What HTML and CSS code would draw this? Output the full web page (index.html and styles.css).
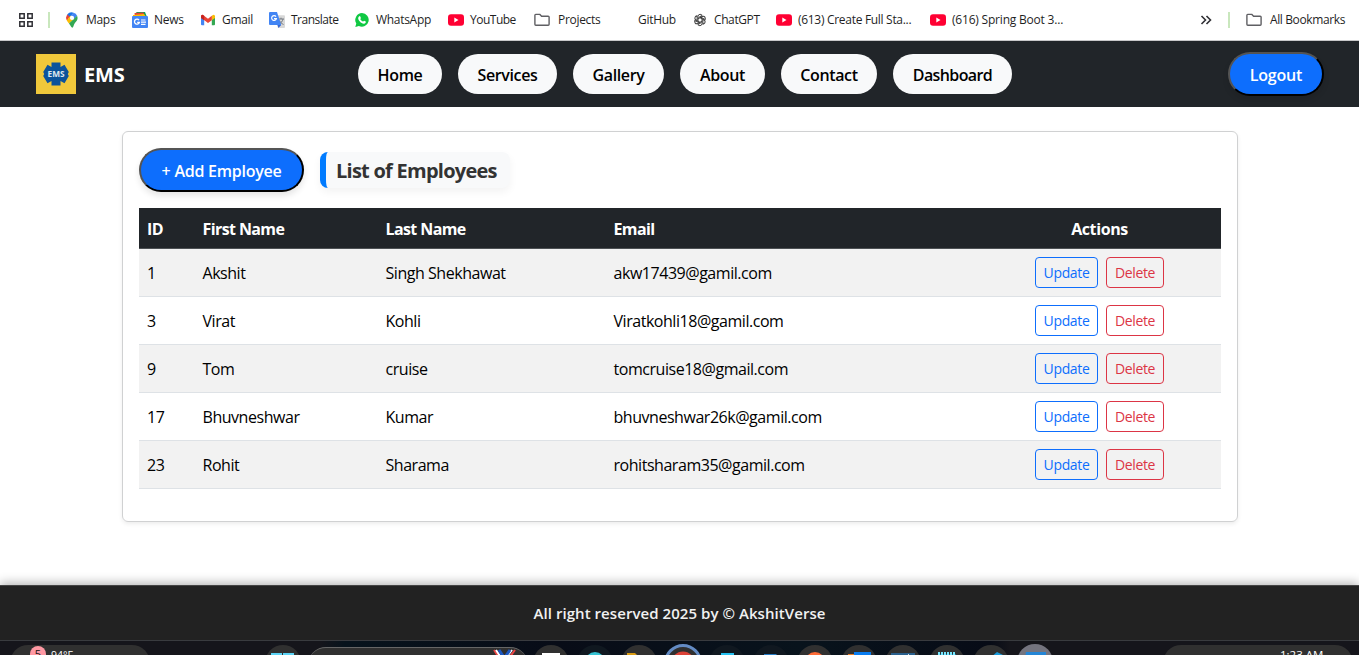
FILE: index.html
```html
<!DOCTYPE html>
<html lang="en">
<head>
<meta charset="utf-8">
<title>EMS</title>
<link rel="stylesheet" href="styles.css">
</head>
<body>
<svg class="defs" width="0" height="0">
  <symbol id="yt" viewBox="0 0 16 16"><rect y="2.3" width="16" height="11.4" rx="3" fill="#ff0033"/><path d="M6.3 5.6v4.8L10.5 8z" fill="#fff"/></symbol>
  <symbol id="folder" viewBox="0 0 16 16"><path d="M.9 12.2V3.2q0-.8.8-.8h4.2l1.7 1.8h6.6q.9 0 .9.9v7.2q0 .9-.9.9H1.8q-.9 0-.9-1z" fill="none" stroke="#5f5f63" stroke-width="1.4"/></symbol>
</svg>
<div class="bookmarks">
  <svg class="apps" width="14" height="14" viewBox="0 0 14 14" fill="none" stroke="#303035" stroke-width="1.5"><path d="M.8.8h4.4v4.4H.8zM8.8.8h4.4v4.4H8.8zM.8 8.8h4.4v4.4H.8zM8.8 8.8h4.4v4.4H8.8z"/></svg>
  <i class="sep"></i>
  <div class="bm maps"><svg viewBox="0 0 16 16"><path d="M3.4 8.7C2.4 7 2 6 2.2 4.7L6 8z" fill="#ea4335"/><path d="M3.2 2.5A5.8 5.8 0 0 1 9.6.7L5.2 5.9z" fill="#1a73e8"/><path d="M3.2 2.5l2.7 2.3-3.2 3.4A5.7 5.7 0 0 1 3.2 2.5z" fill="#ea4335"/><path d="M9.6.7a5.6 5.6 0 0 1 3.5 3L9.9 7.4 6.3 4.5z" fill="#4285f4"/><path d="M2.7 8.2l4-4.7L10 7.1l-5 4.5C4.2 10.4 3.300 9.500 2.700 8.200z" fill="#fbbc04"/><path d="M13.100 3.700c1.600 4-1.200 5.800-2.500 7.900-1 1.600-1.200 4.200-2.300 4.200S7 13.900 5 11.600z" fill="#34a853"/><circle cx="8" cy="5.900" r="2.100" fill="#fff"/></svg><span>Maps</span></div>
  <div class="bm news"><svg viewBox="0 0 16 16"><path d="M4.500 0H13l2 5H3z" fill="#0f9d58"/><path d="M2.500 1l9-.5L13 6H3z" fill="#ea4335"/><path d="M1 3l11-1 3 4H1z" fill="#fbbc04"/><rect y="4" width="16" height="12" rx="1" fill="#4285f4"/><path d="M7 8.200A2.500 2.500 0 1 0 7.400 10.300H5.200" fill="none" stroke="#fff" stroke-width="1.300"/><path d="M9 8h4.500M9 10.200h5M9 12.400h4.500" stroke="#fff" stroke-width="1.200"/></svg><span>News</span></div>
  <div class="bm gmail"><svg viewBox="0 0 16 16"><path d="M1 4h3.200v9.200H2q-1 0-1-1z" fill="#4285f4"/><path d="M11.800 4H15v8.200q0 1-1 1h-2.200z" fill="#34a853"/><path d="M11.800 3.700l1.200-.8q2-.6 2 1.500v1.500l-3.200 2.300z" fill="#fbbc04"/><path d="M1 4.400q0-2.100 2-1.500l5 3.800 3.800-3v4.500L8 11 1 5.800z" fill="#ea4335"/><path d="M1 4.400q0-1.700 1.500-1.600l1.700 1v4.400L1 5.900z" fill="#c5221f"/></svg><span>Gmail</span></div>
  <div class="bm translate"><svg viewBox="0 0 16 16"><path d="M5 3.300h10q1 0 1 1V15q0 1-1 1H9z" fill="#d8d8d8"/><path d="M9 7h6M12 5.700V7m2 0c-.5 2.500-2 4-4 5m.5-3.500c.8 1.800 2 3 4 4" stroke="#747b83" fill="none"/><path d="M1 0h7l4.200 12.900H1q-1 0-1-1V1q0-1 1-1z" fill="#4285f4"/><path d="M8.500 12.900h3.700L9.500 16z" fill="#3367d6"/><path d="M7 4.600A2.400 2.400 0 1 0 7.400 6.600H5" fill="none" stroke="#fff" stroke-width="1.200"/></svg><span>Translate</span></div>
  <div class="bm whatsapp"><svg viewBox="0 0 16 16"><path d="M8 1.100A6.800 6.800 0 1 1 4.900 14L1.300 15l1-3.500A6.800 6.800 0 0 1 8 1.100z" fill="#10c843"/><path d="M5 4.600c.6-.7 1-.7 1.300 0l.6 1.300c.1.500-.7.900-.7 1.200.6 1.300 1.500 2 2.700 2.500.4 0 .8-1 1.200-.9l1.600.8c.6.400-.3 2.200-1.900 2.200C7 11.500 4 8 4.200 6.200c0-.6.300-1.200.8-1.600z" fill="#fff"/></svg><span>WhatsApp</span></div>
  <div class="bm youtube"><svg><use href="#yt"/></svg><span>YouTube</span></div>
  <div class="bm projects"><svg><use href="#folder"/></svg><span>Projects</span></div>
  <div class="bm github"><span>GitHub</span></div>
  <div class="bm chatgpt"><svg viewBox="0 0 16 16" fill="none" stroke="#3d3d3d" stroke-width=".95"><g id="petal"><path d="M6 9.200V4.500q0-2 2-2.200 1.300 0 2.200 1L6.500 5.600"/></g><use href="#petal" transform="rotate(60 8 8)"/><use href="#petal" transform="rotate(120 8 8)"/><use href="#petal" transform="rotate(180 8 8)"/><use href="#petal" transform="rotate(240 8 8)"/><use href="#petal" transform="rotate(300 8 8)"/></svg><span>ChatGPT</span></div>
  <div class="bm full"><svg><use href="#yt"/></svg><span>(613) Create Full Sta...</span></div>
  <div class="bm spring"><svg><use href="#yt"/></svg><span>(616) Spring Boot 3...</span></div>
  <svg class="more" width="12" height="10" viewBox="0 0 12 10" fill="none" stroke="#303035" stroke-width="1.600"><path d="M1.500 1l4 4-4 4M6.500 1l4 4-4 4"/></svg>
  <i class="sep"></i>
  <div class="bm all"><svg><use href="#folder"/></svg><span>All Bookmarks</span></div>
</div>

<header class="navbar">
  <div class="brand">
    <svg width="40" height="40" viewBox="0 0 40 40"><path d="M0 0h40v40H0z" fill="#f0c83b"/><path d="M15.500 8.500h9v4.500l4-2.300 4.300 7.200-1 2.100 1 2.100-4.300 7.200-4-2.300v4.500h-9V27l-4 2.300-4.300-7.200 1-2.100-1-2.100 4.300-7.200 4 2.300z" fill="#0c539b"/><text x="20" y="23.200" text-anchor="middle" textLength="17" lengthAdjust="spacingAndGlyphs" class="logo-text">EMS</text></svg>
    <span>EMS</span>
  </div>
  <nav class="links">
    <a class="home">Home</a><a class="services">Services</a><a class="gallery">Gallery</a><a class="about">About</a><a class="contact">Contact</a><a class="dashboard">Dashboard</a>
  </nav>
  <button class="btn-main logout">Logout</button>
</header>

<main class="content">
  <section class="card">
    <div class="card-head">
      <button class="btn-main add">+ Add Employee</button>
      <h2>List of Employees</h2>
    </div>
    <table>
      <colgroup><col class="c-id"><col class="c-first"><col class="c-last"><col class="c-email"><col class="c-act"></colgroup>
      <thead><tr><th>ID</th><th>First Name</th><th>Last Name</th><th>Email</th><th class="act">Actions</th></tr></thead>
      <tbody>
        <tr><td>1</td><td>Akshit</td><td>Singh Shekhawat</td><td>akw17439@gamil.com</td><td><div class="actions"><button class="upd">Update</button><button class="del">Delete</button></div></td></tr>
        <tr><td>3</td><td>Virat</td><td>Kohli</td><td>Viratkohli18@gamil.com</td><td><div class="actions"><button class="upd">Update</button><button class="del">Delete</button></div></td></tr>
        <tr><td>9</td><td>Tom</td><td>cruise</td><td>tomcruise18@gmail.com</td><td><div class="actions"><button class="upd">Update</button><button class="del">Delete</button></div></td></tr>
        <tr><td>17</td><td>Bhuvneshwar</td><td>Kumar</td><td>bhuvneshwar26k@gamil.com</td><td><div class="actions"><button class="upd">Update</button><button class="del">Delete</button></div></td></tr>
        <tr><td>23</td><td>Rohit</td><td>Sharama</td><td>rohitsharam35@gamil.com</td><td><div class="actions"><button class="upd">Update</button><button class="del">Delete</button></div></td></tr>
      </tbody>
    </table>
  </section>
</main>

<footer class="footer">All right reserved 2025 by © AkshitVerse</footer>

<div class="taskbar">
  <div class="pill weather"><b>5</b><span>94°F</span></div>
  <div class="disc start"><svg viewBox="0 0 36 36"><path d="M6 8h11v11H6zM18 8h11v11H18z" fill="#5bd3f5"/></svg></div>
  <div class="pill search"><svg viewBox="0 0 50 12"><ellipse cx="9" cy="11" rx="5" ry="4" fill="#777"/><path d="M21 2l8 12" stroke="#e44" stroke-width="2"/><path d="M23 2l8 12M39 2l-8 10" stroke="#fff" stroke-width="2"/><path d="M26 2l6 9M37 2l-7 10" stroke="#1c58c4" stroke-width="3"/><path d="M42 2l-9 12" stroke="#e44" stroke-width="2"/></svg></div>
  <div class="disc view"><svg viewBox="0 0 36 36"><path d="M9 8h18v12H9z" fill="#fff"/></svg></div>
  <div class="disc dark edge"><svg viewBox="0 0 36 36"><circle cx="18" cy="17" r="10" fill="#36c3d3"/></svg></div>
  <div class="disc files"><svg viewBox="0 0 36 36"><path d="M6 8h8l3 3v8H6z" fill="#d99b13"/></svg></div>
  <div class="disc ring"><svg viewBox="0 0 36 36"><circle cx="18" cy="18" r="13" fill="#dc4237"/></svg></div>
  <div class="disc dark phone"><svg viewBox="0 0 36 36"><path d="M12 8h13v3H12z" fill="#25c1f1"/><path d="M13 11h11v9H13z" fill="#1572b5"/></svg></div>
  <div class="disc dark mail"><svg viewBox="0 0 36 36"><path d="M11 9h12l3 3v8H11z" fill="#247bc5"/></svg></div>
  <div class="disc postman"><svg viewBox="0 0 36 36"><circle cx="18" cy="17" r="10" fill="#ff6c37"/></svg></div>
  <div class="disc outlook"><svg viewBox="0 0 36 36"><path d="M7 9h6v10H7z" fill="#e87b25"/><path d="M13 7h17v13H13z" fill="#087cf0"/></svg></div>
  <div class="disc sql"><svg viewBox="0 0 36 36"><path d="M6 8h24v12H6z" fill="#2a608d"/><path d="M23 9l3 3" stroke="#ddd"/></svg></div>
  <div class="disc notepad"><svg viewBox="0 0 36 36"><path d="M9 9h18v11H9z" fill="#176b88"/><path d="M9 9h18" stroke="#77e7ff" stroke-width="4" stroke-dasharray="2 1"/></svg></div>
  <div class="disc code"><svg viewBox="0 0 36 36"><path d="M17 13l7-6 6 3v10H17z" fill="#189bdc"/></svg></div>
  <div class="disc active"><svg viewBox="0 0 36 36"><path d="M9 8h20v12H7z" fill="#2485d5"/></svg></div>
  <div class="pill clock"><span>1:23 AM</span></div>
</div>
</body>
</html>
```

FILE: styles.css
```css
* { box-sizing: border-box; }
body { margin: 0; width: 1359px; height: 655px; overflow: hidden; display: flex; flex-direction: column; background: #fff; font: 16px/24px "Open Sans", "Noto Sans", sans-serif; color: #000; }
button { font-family: inherit; margin: 0; }
.defs { display: none; }

.bookmarks { height: 41px; flex: none; display: flex; align-items: center; border-bottom: 1px solid #c8c8c9; padding-left: 19px; font-size: 12px; line-height: 16px; color: #1f1f1f; }
.bookmarks > * { flex: none; }
.sep { width: 2px; height: 16px; background: #c9e7bd; margin-left: 15px; }
.bm { display: flex; gap: 6px; white-space: nowrap; letter-spacing: -.3px; }
.bm svg { width: 16px; height: 16px; flex: none; }
.maps { width: 68px; margin-left: 14px; }
.news { width: 68px; }
.gmail { width: 69px; }
.translate { width: 85px; letter-spacing: -.5px; }
.whatsapp { width: 94px; }
.youtube { width: 86px; letter-spacing: -.5px; }
.projects { width: 82px; gap: 8px; }
.github { width: 76px; padding-left: 22px; }
.chatgpt { width: 84px; letter-spacing: -.4px; }
.full { width: 154px; }
.spring { width: 270px; letter-spacing: -.2px; }
.more { margin-right: 1px; }
.more + .sep { margin-left: 15px; }
.all { margin-left: 16px; gap: 8px; letter-spacing: -.38px; }

.navbar { height: 66px; flex: none; background: #212529; display: grid; grid-template-columns: 322px 1fr 96px; align-items: center; padding: 0 35px 0 36px; }
.brand { display: flex; align-items: center; gap: 8px; color: #fff; font-size: 20px; font-weight: 700; letter-spacing: -.2px; }
.brand span { padding-top: 2px; }
.logo-text { font: 700 9px "Open Sans", sans-serif; fill: #dfe7ee; letter-spacing: 0; }
.links { display: flex; gap: 16px; }
.links a { height: 40px; padding-top: 1px; border-radius: 20px; background: #f8f9fa; display: flex; align-items: center; justify-content: center; font-weight: 600; letter-spacing: -.38px; }
.home { width: 84px; }
.services { width: 99px; }
.gallery { width: 91px; }
.about { width: 85px; }
.contact { width: 96px; }
.dashboard { width: 119px; }
.links .dashboard { letter-spacing: -.6px; }
.btn-main { height: 44px; border: 2px outset #000; border-radius: 22px; background: #0d6efd; color: #fff; font-size: 16px; font-weight: 600; padding: 1px 0 0; white-space: nowrap; box-shadow: 0 4px 6px rgba(0,0,0,.1); letter-spacing: -.2px; }
.logout { width: 96px; }

.content { flex: 1; padding: 24px 121px 0 122px; }
.card { height: 391px; border: 1px solid #d0d1d2; border-radius: 6px; padding: 16px; box-shadow: 0 2px 4px rgba(0,0,0,.075); }
.card-head { display: flex; align-items: center; gap: 16px; margin-bottom: 16px; }
.add { width: 165px; letter-spacing: -.25px; }
.card-head h2 { margin: 0; width: 190px; height: 36px; border-left: 6px solid #007bff; border-radius: 8px; background: #f8f9fa; box-shadow: 0 4px 8px rgba(0,0,0,.05); padding-left: 10px; font-size: 20px; line-height: 37px; font-weight: 700; color: #333; white-space: nowrap; letter-spacing: -.75px; }
table { width: 1082px; border-collapse: separate; border-spacing: 0; table-layout: fixed; }
.c-id { width: 55.500px; }
.c-first { width: 183px; }
.c-last { width: 228px; }
.c-email { width: 372.500px; }
.c-act { width: 243px; }
th { height: 41px; background: #212529; color: #fff; text-align: left; font-weight: 700; padding: 1px 8px 0; border-bottom: 1px solid #4d5154; letter-spacing: -.6px; }
th.act { text-align: center; letter-spacing: -.4px; }
td { height: 48px; padding: 1px 8px 0; border-bottom: 1px solid #dee2e6; letter-spacing: -.46px; white-space: nowrap; }
tbody tr:nth-child(odd) td { background: #f2f2f2; }
.actions { display: flex; justify-content: center; gap: 8px; padding-bottom: 2px; }
.actions button { height: 31px; border: 1px solid; border-radius: 4px; background: transparent; font-size: 14px; padding: 0; letter-spacing: -.35px; }
.upd { width: 63px; color: #0d6efd; }
.del { width: 58px; color: #dc3545; }

.footer { height: 55px; flex: none; background: #222; border-top: 1px solid #444; color: #f1f1f1; font-size: 15px; font-weight: 600; line-height: 55px; text-align: center; letter-spacing: .06px; box-shadow: 0 -2px 10px rgba(0,0,0,.3); }
.taskbar { height: 15px; flex: none; border-top: 1px solid #393b3f; overflow: hidden; display: flex; align-items: flex-start; background: linear-gradient(90deg, #15151b 0 320px, #07131c 345px, #080c17 560px, #08131c 800px, #070b16 990px, #15151b 1010px); color: #fff; }
.pill { height: 36px; border-radius: 18px; background: #303030; flex: none; margin-top: 4px; }
.weather { width: 140px; margin-left: 10px; display: flex; padding-left: 20px; gap: 5px; font-size: 11px; }
.weather b { width: 16px; height: 16px; border-radius: 8px; margin-top: 1px; background: #ff99a4; color: #111; font: 11px/15px "Open Sans", sans-serif; text-align: center; }
.weather span { line-height: 21px; font-size: 10.500px; }
.disc { width: 36px; height: 36px; border-radius: 50%; background: #303030; flex: none; margin: 4px 0 0 8px; }
.disc svg { display: block; width: 36px; height: 36px; }
.start { margin-left: 115px; }
.search { width: 220px; margin: 6px 0 0 7px; border-top: 1px solid #666; padding-left: 165px; }
.search svg { display: block; width: 50px; height: 12px; }
.view { margin-left: 5px; }
.dark { background: #101820; }
.ring { width: 38px; height: 38px; border: 3px solid #638bc4; margin: 3px 0 0 7px; }
.ring svg { width: 32px; height: 32px; }
.phone { margin-left: 7px; }
.active { background: #74747f; margin-top: 3px; }
.clock { width: 190px; margin-left: 110px; padding-left: 117px; font-size: 11.500px; line-height: 20px; }
```
